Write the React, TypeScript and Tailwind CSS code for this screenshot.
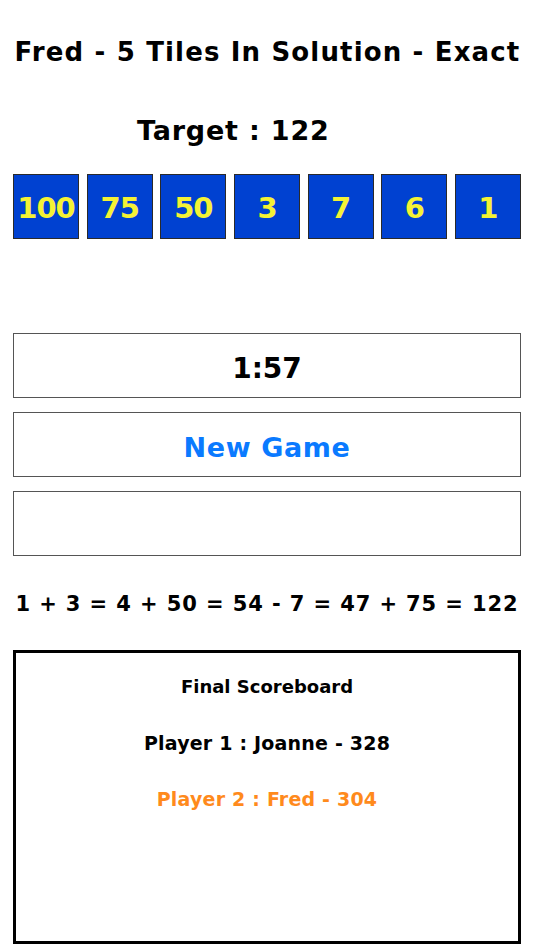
import React from "react";

const font = { fontFamily: '"DejaVu Sans", "Noto Sans", sans-serif' };

export default function App() {
  const tiles = ["100", "75", "50", "3", "7", "6", "1"];
  return (
    <div className="w-[534px] h-[950px] bg-white text-black overflow-hidden" style={font}>
      <div className="mt-[32px] h-[40px] flex items-center justify-center pl-[1px] text-[26px] font-bold whitespace-nowrap tracking-[1.15px]">
        Fred - 5 Tiles In Solution - Exact
      </div>
      <div className="mt-[39px] h-[40px] flex items-center pl-[137px] text-[27px] font-bold whitespace-nowrap tracking-[0.8px]">
        Target : 122
      </div>
      <div className="mt-[23px] mx-[13px] flex justify-between">
        {tiles.map((t) => (
          <div
            key={t}
            className="w-[66px] h-[65px] bg-[#0041d1] border border-[#2a2a2a] flex items-center justify-center pt-[4px] text-[#f4f235] text-[29px] font-bold tracking-[-1px]"
          >
            {t}
          </div>
        ))}
      </div>
      <div className="mt-[94px] mx-[13px] flex flex-col gap-[14px]">
        <div className="h-[65px] border border-[#555] flex items-center justify-center pt-[7px] text-[28px] font-bold">
          1:57
        </div>
        <div className="h-[65px] border border-[#555] flex items-center justify-center pt-[7px] text-[27px] font-bold tracking-[0.6px] text-[#0a7aff]">
          New Game
        </div>
        <div className="h-[65px] border border-[#555]"></div>
      </div>
      <div className="mt-[34px] h-[30px] flex items-center justify-center text-[21px] font-bold whitespace-nowrap tracking-[0.9px]">
        1 + 3 = 4 + 50 = 54 - 7 = 47 + 75 = 122
      </div>
      <div className="mt-[30px] mx-[13px] h-[294px] border-[3px] border-black flex flex-col items-center pt-[19px]">
        <div className="h-[28px] flex items-center text-[18px] font-bold">Final Scoreboard</div>
        <div className="mt-[28px] h-[28px] flex items-center pt-[2px] text-[19px] font-bold tracking-[0.2px]">Player 1 : Joanne - 328</div>
        <div className="mt-[28px] h-[28px] flex items-center pt-[2px] text-[19px] font-bold tracking-[0.2px] text-[#ff8a1c]">Player 2 : Fred - 304</div>
      </div>
    </div>
  );
}
